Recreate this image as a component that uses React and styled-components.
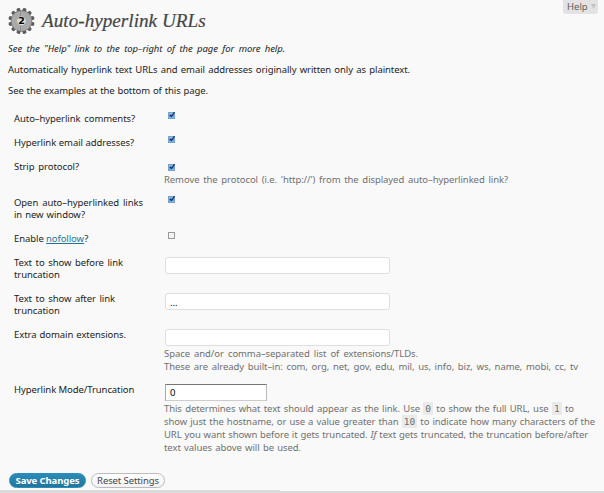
import React from "react";
import styled, { createGlobalStyle } from "styled-components";

const Global = createGlobalStyle`
  * { box-sizing: border-box; }
  body { margin: 0; background: #f9f9f9; overflow: hidden; }
`;
const Page = styled.main`
  height: 493px;
  display: flex;
  flex-direction: column;
  background: #f9f9f9;
  color: #222;
  font: 9.5px/12px "Noto Sans", "Open Sans", sans-serif;
  letter-spacing: -0.08px;
`;
const Header = styled.header`
  display: flex;
  justify-content: space-between;
  align-items: flex-start;
  height: 42px;
  padding: 0 6px 0 7px;
`;
const Brand = styled.div`
  display: flex;
  align-items: center;
  gap: 6px;
  padding-top: 7px;
`;
const Title = styled.h1`
  margin: -2px 0 0;
  width: 165px;
  font: italic 400 19.2px/27px "Liberation Serif", serif;
  letter-spacing: 0;
  color: #464646;
  white-space: nowrap;
  -webkit-text-stroke: 0.2px #464646;
`;
const HelpTab = styled.button`
  display: flex;
  align-items: center;
  gap: 3px;
  width: 35px;
  height: 14px;
  padding: 0 0 1px 4px;
  border: 0;
  border-radius: 0 0 3px 3px;
  background: #e3e3e3;
  color: #606060;
  font: inherit;
`;
const Line = styled.span`
  display: block;
  width: ${(p) => p.$w}px;
  text-align: justify;
  text-align-last: justify;
  white-space: nowrap;
`;
const Intro = styled.section`
  padding: 1px 8px 0;
  p { margin: 0 0 9px; }
`;
const Form = styled.form`
  display: flex;
  flex-direction: column;
  padding: 7px 0 0 14px;
`;
const Row = styled.div`
  display: grid;
  grid-template-columns: 150px 1fr;
  height: ${(p) => p.$h}px;
`;
const Label = styled.label`
  color: #1c1c1c;
`;
const Field = styled.div`
  display: flex;
  flex-direction: column;
  align-items: flex-start;
  padding-left: 1px;
`;
const Check = styled.svg`
  display: block;
  margin: ${(p) => p.$top || -2}px 0 0 2px;
`;
const TextInput = styled.input`
  width: ${(p) => (p.$small ? 102 : 225)}px;
  height: 17px;
  padding: 2px 4px 0;
  border: 1px solid #dfdfdf;
  border-radius: 3px;
  background: #fff;
  color: #000;
  font: inherit;
  outline: 0;
  ${(p) => p.$small && "border-color: #757575 #bbb #ccc #aaa; border-radius: 0; padding-top: 0;"}
`;
const Hint = styled.div`
  margin: ${(p) => p.$top || 1}px 0 0 -1px;
  line-height: 13px;
  color: #707070;
`;
const Code = styled.code`
  display: inline-block;
  height: 13px;
  padding: 0 2px;
  background: #eaeaea;
  font: 9.5px/13px "DejaVu Sans Mono", monospace;
  letter-spacing: 0;
`;
const Link = styled.a`
  color: #21759b;
  text-decoration: underline;
`;
const Actions = styled.div`
  display: flex;
  gap: 5px;
  margin: 0 0 2px 9px;
`;
const Button = styled.button`
  width: ${(p) => (p.$primary ? 77 : 74)}px;
  height: 15px;
  padding: 0;
  border: 1px solid ${(p) => (p.$primary ? "#298cba" : "#bbb")};
  border-radius: 8px;
  background: ${(p) => (p.$primary ? "linear-gradient(#298cba, #21759b)" : "linear-gradient(#fff, #f2f2f2)")};
  color: ${(p) => (p.$primary ? "#fff" : "#464646")};
  font: inherit;
  font-weight: ${(p) => (p.$primary ? 700 : 400)};
  letter-spacing: ${(p) => (p.$primary ? -0.1 : -0.1)}px;
  line-height: 13px;
  white-space: nowrap;
`;
const Footer = styled.footer`
  height: 3px;
  display: flex;
  align-items: flex-end;
  &::before { content: ""; width: 280px; height: 3px; background: #dadada; }
  &::after { content: ""; flex: 1; height: 2px; background: #dadada; }
`;
const Bottom = styled.div`
  margin-top: auto;
`;

const teeth = Array.from({ length: 12 }, (_, i) => i * 30 + 15);

function Gear() {
  return (
    <svg width="29" height="28" viewBox="-14.5 -14 29 28">
      {teeth.map((a) => (
        <path key={a} transform={`rotate(${a})`} d="M-2-9-1.8-12.7Q0-13.9 1.8-12.7L2-9Z" fill="#5c5c5c" />
      ))}
      <circle r="10.7" fill="#747474" />
      <circle r="10.1" fill="#a9a9a9" />
      <path d="M-1-9.6V9.6" stroke="#888" strokeWidth=".7" />
      <circle r="4.4" fill="#dcdcdc" />
      <text y="3.4" textAnchor="middle" fontFamily="DejaVu Sans" fontSize="9.5" fontWeight="700" fill="#000">2</text>
    </svg>
  );
}

function Box({ on, top }) {
  return (
    <Check $top={top} width="9" height="9" viewBox="0 0 9 9">
      <defs>
        <linearGradient id="blue" x2="0" y2="1">
          <stop stopColor="#a9cbed" />
          <stop offset=".5" stopColor="#4f9be2" />
          <stop offset="1" stopColor="#83cdf8" />
        </linearGradient>
      </defs>
      <rect x="1.5" y="1.5" width="6" height="6" fill={on ? "url(#blue)" : "#f4f4f4"} stroke={on ? "#7f9fcb" : "#9a9a9a"} />
      {on && <path d="M2.9 3.8 4.4 5.5 7.6 1.2" fill="none" stroke="#163168" strokeWidth="1.2" />}
    </Check>
  );
}

const Lines = ({ items }) => items.map(([w, t], i) => <Line key={i} $w={w}>{t}</Line>);

export default function App() {
  return (
    <Page>
      <Global />
      <Header>
        <Brand><Gear /><Title>Auto-hyperlink URLs</Title></Brand>
        <HelpTab>Help
          <svg width="5" height="5" viewBox="0 0 5 5"><path d="M0 0H5L2.5 5Z" fill="#c2c2c2" /></svg>
        </HelpTab>
      </Header>
      <Intro>
        <p><em><Line $w={277}>See the "Help" link to the top–right of the page for more help.</Line></em></p>
        <p><Line $w={402}>Automatically hyperlink text URLs and email addresses originally written only as plaintext.</Line></p>
        <p><Line $w={200}>See the examples at the bottom of this page.</Line></p>
      </Intro>
      <Form>
        <Row $h={24}><Label><Lines items={[[121, "Auto–hyperlink comments?"]]} /></Label><Field><Box on /></Field></Row>
        <Row $h={24}><Label><Lines items={[[120, "Hyperlink email addresses?"]]} /></Label><Field><Box on /></Field></Row>
        <Row $h={36}>
          <Label><Lines items={[[65, "Strip protocol?"]]} /></Label>
          <Field><Box on top={2} /><Hint $top={1}><Lines items={[[344, "Remove the protocol (i.e. 'http://') from the displayed auto–hyperlinked link?"]]} /></Hint></Field>
        </Row>
        <Row $h={36}><Label><Lines items={[[129, "Open auto–hyperlinked links"], [71, "in new window?"]]} /></Label><Field><Box on /></Field></Row>
        <Row $h={24}><Label><Lines items={[[74, <>Enable <Link>nofollow</Link>?</>]]} /></Label><Field><Box top={-2} /></Field></Row>
        <Row $h={36}><Label><Lines items={[[109, "Text to show before link"], [45, "truncation"]]} /></Label><Field><TextInput /></Field></Row>
        <Row $h={36}><Label><Lines items={[[101, "Text to show after link"], [45, "truncation"]]} /></Label><Field><TextInput defaultValue="..." /></Field></Row>
        <Row $h={55}>
          <Label><Lines items={[[112, "Extra domain extensions."]]} /></Label>
          <Field><TextInput /><Hint><Lines items={[[254, "Space and/or comma–separated list of extensions/TLDs."], [414, "These are already built–in: com, org, net, gov, edu, mil, us, info, biz, ws, name, mobi, cc, tv"]]} /></Hint></Field>
        </Row>
        <Row $h={71}>
          <Label><Lines items={[[120, "Hyperlink Mode/Truncation"]]} /></Label>
          <Field><TextInput $small defaultValue="0" />
            <Hint><Lines items={[
              [410, <>This determines what text should appear as the link. Use <Code>0</Code> to show the full URL, use <Code>1</Code> to</>],
              [431, <>show just the hostname, or use a value greater than <Code>10</Code> to indicate how many characters of the</>],
              [424, <>URL you want shown before it gets truncated. <em>If</em> text gets truncated, the truncation before/after</>],
              [137, "text values above will be used."],
            ]} /></Hint>
          </Field>
        </Row>
      </Form>
      <Bottom>
        <Actions><Button $primary>Save Changes</Button><Button>Reset Settings</Button></Actions>
        <Footer />
      </Bottom>
    </Page>
  );
}
